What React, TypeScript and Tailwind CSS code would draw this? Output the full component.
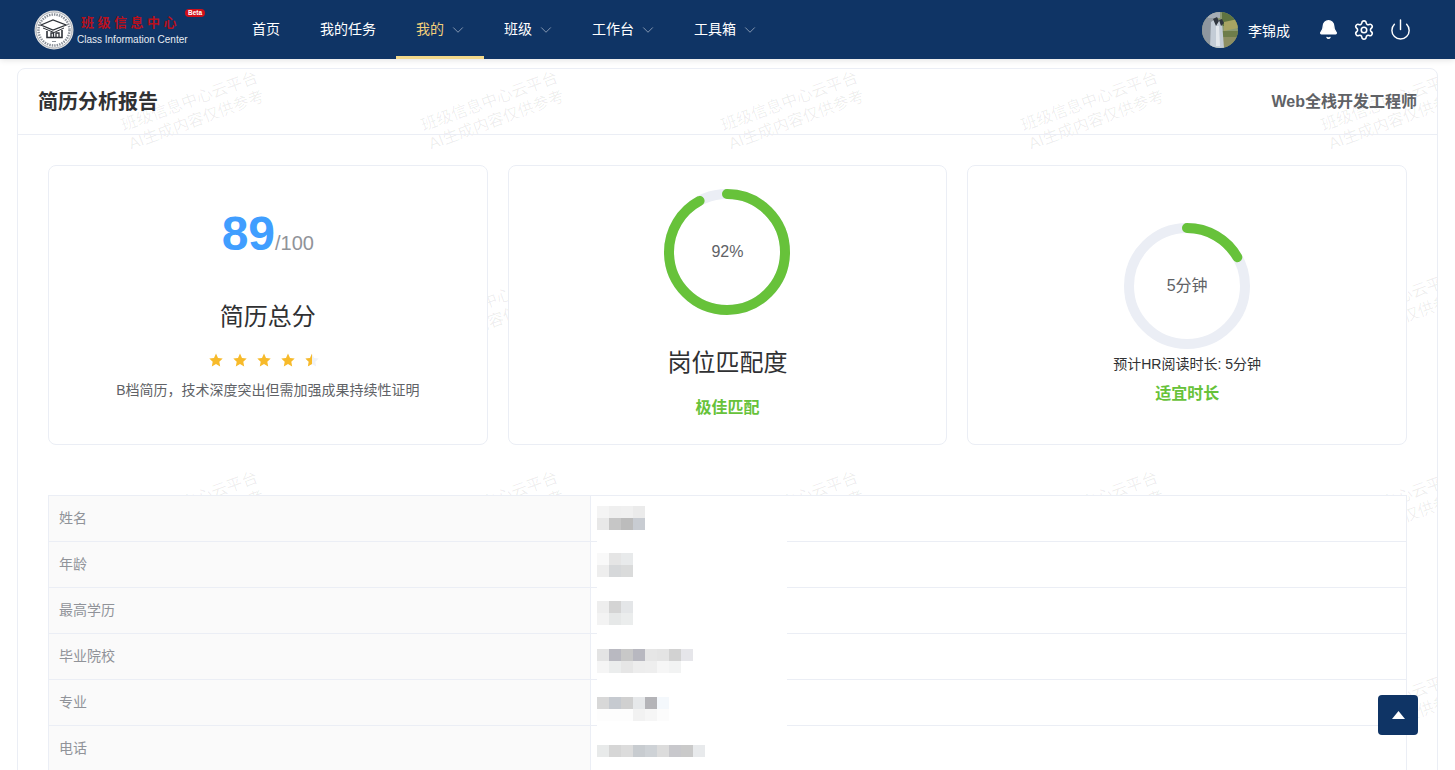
import React from "react";
import { Settings, Power, Bell, ChevronDown } from "lucide-react";

const nav = [
  { t: "首页" },
  { t: "我的任务" },
  { t: "我的", c: true, active: true },
  { t: "班级", c: true },
  { t: "工作台", c: true },
  { t: "工具箱", c: true },
];

const rows: { label: string; pad: string; mosaic: string[][] }[] = [
  { label: "姓名", pad: "pt-[10px]", mosaic: [["#f4f4f4", "#efefef", "#f0f0f0", "#ebebeb"], ["#e8e8e8", "#c6c6c6", "#bcbcbc", "#c8ccd2"]] },
  { label: "年龄", pad: "pt-[11px]", mosaic: [["#f9f9f9", "#e5e5e5", "#e8eaeb"], ["#eeeeee", "#d6d8da", "#dadbdb"]] },
  { label: "最高学历", pad: "pt-[13px]", mosaic: [["#eeeeee", "#d4d4d4", "#e4e6e8"], ["#f3f3f3", "#e6e8e8", "#ebeded"]] },
  { label: "毕业院校", pad: "pt-[15px]", mosaic: [["#e4e4e4", "#b9b9c1", "#c8c8c8", "#b8b8c0", "#e6e6e6", "#e4e4e4", "#d2d2d2", "#e6e6ea"], ["#f5f5f5", "#ebeded", "#e6e6e6", "#ededed", "#eeeeee", "#f6f6f6", "#f2f3f3", "#ffffff"]] },
  { label: "专业", pad: "pt-[17px]", mosaic: [["#d8d8d8", "#c6cad0", "#d0d0d0", "#e6e8ea", "#b4b4b8", "#f4f8fc"], ["#fdfdfd", "#fdfdfd", "#fdfdfd", "#f2f2f2", "#f6f6f6", "#fcfcfc"]] },
  { label: "电话", pad: "pt-[19px]", mosaic: [["#e8eaea", "#d6d6d6", "#dcdcdc", "#c8ccd0", "#ced2d6", "#dcdcdc", "#c8c8cc", "#cacaca", "#e8eaec"]] },
];

function Ring({ pct, label }: { pct: number; label: string }) {
  const r = 58;
  const c = 2 * Math.PI * r;
  return (
    <div className="relative h-[126px] w-[126px]">
      <svg viewBox="0 0 126 126" className="h-[126px] w-[126px] -rotate-90">
        <circle cx="63" cy="63" r={r} fill="none" stroke="#ebeef5" strokeWidth="10" />
        <circle cx="63" cy="63" r={r} fill="none" stroke="#67c23a" strokeWidth="10" strokeLinecap="round" strokeDasharray={`${c * pct} ${c}`} />
      </svg>
      <div className="absolute inset-0 flex items-center justify-center text-base text-[#606266]">{label}</div>
    </div>
  );
}

function Star({ half }: { half?: boolean }) {
  const d = "M7 .6l2 4.3 4.7.6-3.4 3.2.9 4.7L7 11.100l-4.200 2.300.9-4.700L.3 5.500 5 4.900z";
  return (
    <svg viewBox="0 0 14 14" className="h-[14px] w-[14px]">
      <path d={d} fill={half ? "#eff2f7" : "#f7ba2a"} />
      {half && <path d={d} fill="#f7ba2a" style={{ clipPath: "inset(0 50% 0 0)" }} />}
    </svg>
  );
}

function Emblem() {
  return (
    <svg viewBox="0 0 40 40" className="h-10 w-10 shrink-0">
      <circle cx="20" cy="20" r="19.500" fill="#e4e4e4" />
      <circle cx="20" cy="20" r="18" fill="#fff" stroke="#a9adb3" strokeWidth="1" />
      <circle cx="20" cy="20" r="15.500" fill="none" stroke="#8d939b" strokeWidth="2.500" strokeDasharray="1.500 1" />
      <circle cx="20" cy="20" r="13.500" fill="#fff" />
      <path d="M7 15l12-5 13 5-13 5z" fill="#fff" stroke="#2d3137" strokeWidth="1.300" />
      <path d="M9 18l11 4.500 10-4.500" fill="none" stroke="#2d3137" strokeWidth="1" />
      <path d="M13 21v6.500h15V20" fill="none" stroke="#2d3137" strokeWidth="1.600" />
      <path d="M17 27v-4h2.500v4M22 27v-4h3v4" fill="none" stroke="#2d3137" strokeWidth="1.300" />
      <rect x="18" y="31" width="4" height="1" fill="#8d939b" />
    </svg>
  );
}

function Avatar() {
  return (
    <svg viewBox="0 0 36 36" className="h-9 w-9 rounded-full">
      <rect width="36" height="36" fill="#8c9a72" />
      <path d="M20 0h16v14H20z" fill="#5f7440" />
      <path d="M22 10l14-3v9l-14 3z" fill="#a8a463" />
      <path d="M20 19h16v6H20z" fill="#6e7d4a" />
      <path d="M20 25h16v11H20z" fill="#8d8f63" />
      <path d="M0 0h12v36H0z" fill="#8f979f" />
      <path d="M6 0h12v6H6z" fill="#a5adb5" />
      <path d="M9 10q5-5 11 0l2 26H8z" fill="#c3ccd6" />
      <path d="M11 7l4-2 2 4-3 5zM17 8l3-1 2 4-3 3z" fill="#30363f" />
      <path d="M14 14l3 0 1 20h-4z" fill="#e2e7ec" />
    </svg>
  );
}

export default function App() {
  return (
    <div className="relative h-screen overflow-hidden bg-white font-['Liberation_Sans','Noto_Sans_CJK_SC',sans-serif] text-[14px]">
      <header className="relative z-20 flex h-[59px] items-center bg-[#0f3465] pl-[34px] pr-[37px] shadow-[0_1px_6px_rgba(0,0,0,0.12)]">
        <div className="flex w-[198px] items-center gap-[3px]">
          <Emblem />
          <div className="relative flex flex-col pt-[2px]">
            <span className="-mt-[2px] whitespace-nowrap pl-[4px] text-[13px] font-bold leading-[16px] tracking-[3.500px] text-[#b8101c] font-['Noto_Sans_CJK_SC',serif]">班级信息中心</span>
            <span className="mt-[4px] whitespace-nowrap text-[10px] leading-[12px] text-[#e8edf3]">Class Information Center</span>
            <span className="absolute left-[108px] top-[-5px] rounded-full bg-[#d0101a] px-[3px] text-[6.500px] font-bold leading-[8px] text-white">Beta</span>
          </div>
        </div>
        <nav className="flex h-full">
          {nav.map((n) => (
            <div key={n.t} className={`flex h-full items-center gap-[8px] border-b-[3px] px-5 pt-[3px] ${n.active ? "border-[#f3d98b] text-[#f3d07a]" : "border-transparent text-white"}`}>
              <span>{n.t}</span>
              {n.c && (
                <span className="flex h-3 w-3 items-center justify-center">
                  <ChevronDown size={18} strokeWidth={1} className="shrink-0 text-[#a9b6c8]" />
                </span>
              )}
            </div>
          ))}
        </nav>
        <div className="ml-auto flex items-center">
          <Avatar />
          <span className="ml-[10px] mt-[3px] text-white">李锦成</span>
          <div className="ml-5 flex h-9 w-9 items-center justify-center">
            <Bell size={21} fill="#fff" strokeWidth={1.500} className="text-white" />
          </div>
          <div className="flex h-9 w-9 items-center justify-center">
            <Settings size={22} strokeWidth={1.700} className="text-white" />
          </div>
          <div className="flex h-9 w-9 items-center justify-center">
            <Power size={23} strokeWidth={1.500} className="text-white" />
          </div>
        </div>
      </header>

      <main className="px-[17px] pt-[9px]">
        <section className="relative overflow-hidden rounded-[8px] border border-[#ebeef5] bg-white pb-10">
          <div className="pointer-events-none absolute left-[25px] top-[-58px] grid grid-cols-[repeat(5,300px)] auto-rows-[200px] text-[16px] leading-[20px] text-[#000]/[0.07]">
            {Array.from({ length: 20 }).map((_, i) => (
              <div key={i} className="flex -rotate-[20deg] flex-col items-center justify-center whitespace-nowrap">
                <span>班级信息中心云平台</span>
                <span>AI生成内容仅供参考</span>
              </div>
            ))}
          </div>

          <div className="relative flex h-[66px] items-center justify-between border-b border-[#ebeef5] px-5">
            <h1 className="text-[20px] font-bold text-[#303133]">简历分析报告</h1>
            <span className="text-[16px] font-bold text-[#606266]">Web全栈开发工程师</span>
          </div>

          <div className="relative px-[30px] pt-[30px]">
            <div className="grid grid-cols-3 gap-5">
              <div className="flex h-[280px] flex-col items-center rounded-[8px] border border-[#ebeef5] bg-white pt-[40px]">
                <div className="flex items-baseline">
                  <span className="text-[48px] font-bold leading-[56px] text-[#409eff]">89</span>
                  <span className="text-[20px] text-[#909399]">/100</span>
                </div>
                <div className="mt-[37px] text-[24px] leading-[36px] text-[#303133]">简历总分</div>
                <div className="mt-[18px] flex gap-[10px] pr-[8px]">
                  <Star /><Star /><Star /><Star /><Star half />
                </div>
                <p className="mt-[13px] leading-[20px] text-[#606266]">B档简历，技术深度突出但需加强成果持续性证明</p>
              </div>

              <div className="flex h-[280px] flex-col items-center rounded-[8px] border border-[#ebeef5] bg-white pt-[23px]">
                <Ring pct={0.92} label="92%" />
                <div className="mt-[30px] text-[24px] leading-[36px] text-[#303133]">岗位匹配度</div>
                <div className="mt-[15px] text-[16px] font-bold leading-[24px] text-[#67c23a]">极佳匹配</div>
              </div>

              <div className="flex h-[280px] flex-col items-center rounded-[8px] border border-[#ebeef5] bg-white pt-[57px]">
                <Ring pct={0.1667} label="5分钟" />
                <div className="mt-[5px] leading-[20px] text-[#303133]">预计HR阅读时长: 5分钟</div>
                <div className="mt-[8px] text-[16px] font-bold leading-[24px] text-[#67c23a]">适宜时长</div>
              </div>
            </div>

            <div className="mt-[50px] border-l border-r border-t border-[#ebeef5] bg-white">
              {rows.map((r) => (
                <div key={r.label} className="flex h-[46px] border-b border-[#ebeef5]">
                  <div className="flex w-[542px] items-center border-r border-[#ebeef5] bg-[#fafafa] px-[10px] text-[#909399]">{r.label}</div>
                  <div className={`relative flex flex-1 flex-col pl-[6px] ${r.pad}`}>
                    <div className="absolute bottom-[-1px] left-[6px] h-px w-[190px] bg-white" />
                    {r.mosaic.map((line, i) => (
                      <div key={i} className="flex">
                        {line.map((c, j) => (
                          <span key={j} className="h-3 w-3" style={{ backgroundColor: c }} />
                        ))}
                      </div>
                    ))}
                  </div>
                </div>
              ))}
            </div>
          </div>
        </section>
      </main>

      <button className="fixed bottom-[35px] right-[37px] z-30 flex h-10 w-10 items-center justify-center rounded-[4px] bg-[#0f3465]">
        <svg viewBox="0 0 13 8" className="h-2 w-[13px]"><path d="M6.500 0L13 8H0z" fill="#fff" /></svg>
      </button>
    </div>
  );
}
